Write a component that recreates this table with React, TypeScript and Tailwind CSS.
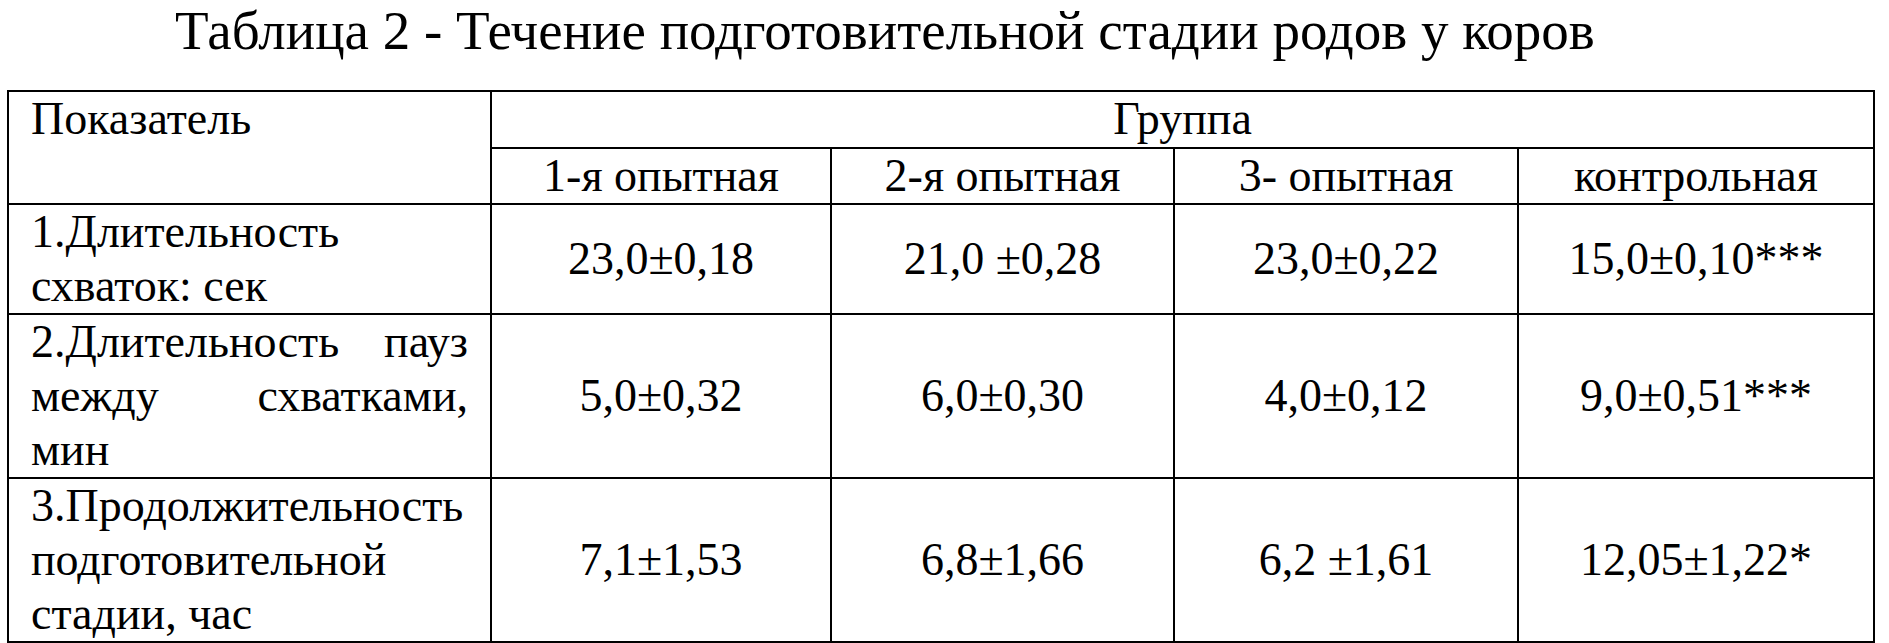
const groups = ["1-я опытная", "2-я опытная", "3- опытная", "контрольная"];

const rows = [
  {
    label: "1.Длительность схваток: сек",
    values: ["23,0±0,18", "21,0 ±0,28", "23,0±0,22", "15,0±0,10***"],
    h: "h-[110px]",
  },
  {
    label: "2.Длительность пауз между схватками, мин",
    values: ["5,0±0,32", "6,0±0,30", "4,0±0,12", "9,0±0,51***"],
    h: "h-[162px]",
  },
  {
    label: "3.Продолжительность подготовительной стадии, час",
    values: ["7,1±1,53", "6,8±1,66", "6,2 ±1,61", "12,05±1,22*"],
    h: "h-[160px]",
  },
];

export default function App() {
  return (
    <div className="w-[1889px] h-[643px] bg-white text-black font-['Liberation_Serif','Times_New_Roman',serif] overflow-hidden">
      <h1 className="pl-[175px] text-[55px] leading-[62px] font-normal">
        Таблица 2 - Течение подготовительной стадии родов у коров
      </h1>

      <table className="mt-[28px] ml-[7px] w-[1866px] table-fixed border-collapse text-[46px] leading-[54px]">
        <colgroup>
          <col className="w-[483px]" />
          <col className="w-[340px]" />
          <col className="w-[343px]" />
          <col className="w-[344px]" />
          <col className="w-[356px]" />
        </colgroup>
        <tbody>
          <tr className="h-[57px]">
            <td rowSpan={2} className="border-2 border-black px-[22px] align-top">
              Показатель
            </td>
            <td colSpan={4} className="border-2 border-black text-center align-top">
              Группа
            </td>
          </tr>
          <tr className="h-[56px]">
            {groups.map((g) => (
              <td key={g} className="border-2 border-black text-center">
                {g}
              </td>
            ))}
          </tr>
          {rows.map((row) => (
            <tr key={row.label} className={row.h}>
              <td className="border-2 border-black px-[22px] align-top text-justify">
                {row.label}
              </td>
              {row.values.map((v, i) => (
                <td key={i} className="border-2 border-black text-center align-middle">
                  {v}
                </td>
              ))}
            </tr>
          ))}
        </tbody>
      </table>
    </div>
  );
}
